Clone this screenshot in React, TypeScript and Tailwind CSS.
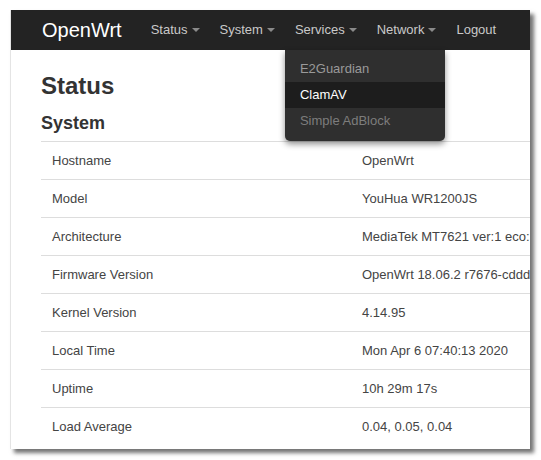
import React, { FC } from "react";

// --- DATA ---

const navItems = [
  { label: "Status", dropdown: true },
  { label: "System", dropdown: true },
  { label: "Services", dropdown: true, open: true },
  { label: "Network", dropdown: true },
  { label: "Logout", dropdown: false },
];

const servicesMenu = [
  { label: "E2Guardian", className: "text-[#9a9a9a]" },
  { label: "ClamAV", className: "bg-[#1d1d1d] text-white" },
  { label: "Simple AdBlock", className: "text-[#7d7d7d]" },
];

const systemRows: [string, string][] = [
  ["Hostname", "OpenWrt"],
  ["Model", "YouHua WR1200JS"],
  ["Architecture", "MediaTek MT7621 ver:1 eco:3"],
  ["Firmware Version", "OpenWrt 18.06.2 r7676-cddd7b4c77 / LuCI"],
  ["Kernel Version", "4.14.95"],
  ["Local Time", "Mon Apr 6 07:40:13 2020"],
  ["Uptime", "10h 29m 17s"],
  ["Load Average", "0.04, 0.05, 0.04"],
];

// --- NAVBAR ---

const Caret: FC = () => (
  <span className="ml-[4px] inline-block h-0 w-0 border-x-4 border-t-4 border-x-transparent border-t-[#8a8a8a] align-middle" />
);

const ServicesDropdown: FC = () => (
  <div className="absolute left-0 top-full z-20 w-[160px] rounded-b-[5px] bg-[#2f2f2f] pb-[7px] pt-[6px] shadow-[0_3px_6px_rgba(0,0,0,0.45)]">
    {servicesMenu.map((item) => (
      <div
        key={item.label}
        className={`flex h-[26px] items-center px-[15px] text-[13px] ${item.className}`}
      >
        {item.label}
      </div>
    ))}
  </div>
);

const Navbar: FC = () => (
  <div className="flex h-[40px] items-center bg-[#232323] pl-[31px]">
    <span className="text-[20px] leading-none text-white">OpenWrt</span>
    <ul className="ml-[19px] flex h-full">
      {navItems.map((item) => (
        <li
          key={item.label}
          className="relative flex h-full items-center px-[10px] text-[13px] text-[#c9c9c9]"
        >
          {item.label}
          {item.dropdown && <Caret />}
          {item.open && <ServicesDropdown />}
        </li>
      ))}
    </ul>
  </div>
);

// --- PAGE ---

export default function App() {
  return (
    <div className="h-[460px] w-[541px] bg-white pl-[10px] pt-[10px] font-['Liberation_Sans',Arial,sans-serif]">
      <div className="relative h-[439px] w-[520px] overflow-hidden border-l border-[#e4e4e4] bg-white shadow-[4px_4px_4px_rgba(0,0,0,0.55)]">
        <Navbar />

        <div className="pl-[30px]">
          <h2 className="mt-[23px] text-[24px] font-bold leading-[26px] text-[#333]">
            Status
          </h2>
          <h3 className="mt-[14px] text-[18px] font-bold leading-[20px] text-[#333]">
            System
          </h3>

          {/* values run past the window's right edge and get clipped */}
          <div className="mt-[8px]">
            {systemRows.map(([label, value]) => (
              <div
                key={label}
                className="flex h-[38px] items-center whitespace-nowrap border-t border-[#dddddd] text-[13px] text-[#444]"
              >
                <div className="w-[310px] shrink-0 pl-[11px]">{label}</div>
                <div className="pl-[11px]">{value}</div>
              </div>
            ))}
          </div>
        </div>
      </div>
    </div>
  );
}
